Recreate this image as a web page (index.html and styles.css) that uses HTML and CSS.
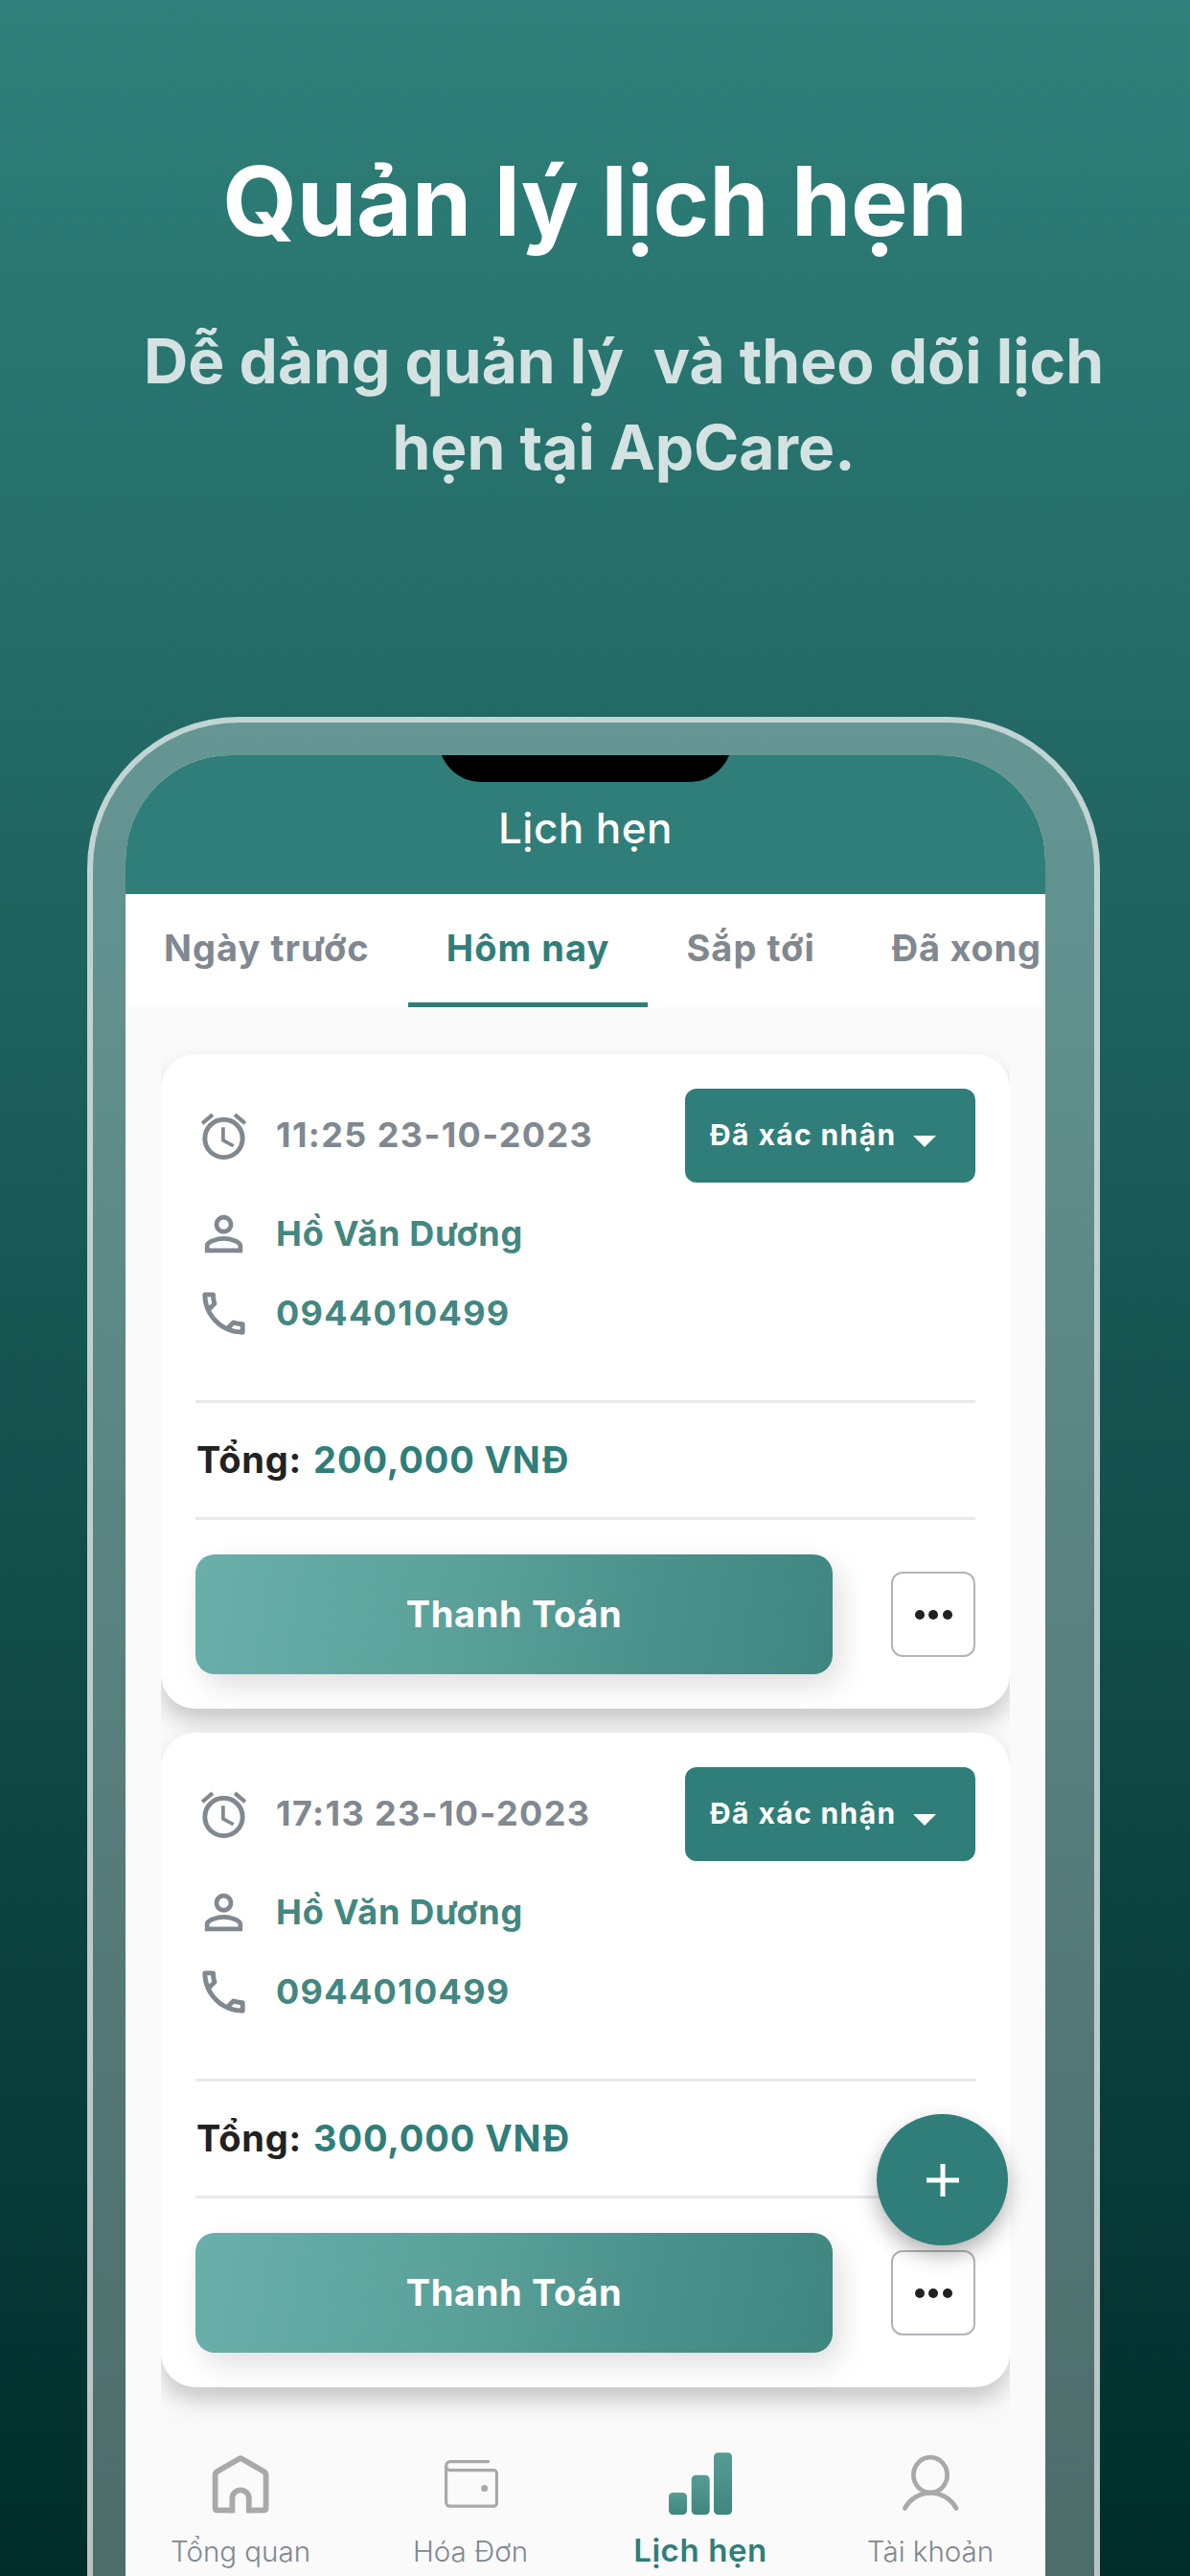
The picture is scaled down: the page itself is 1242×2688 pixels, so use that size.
FILE: index.html
```
<!DOCTYPE html>
<html lang="vi">
<head>
<meta charset="utf-8">
<title>Quản lý lịch hẹn</title>
<link rel="stylesheet" href="styles.css">
</head>
<body>
<svg class="defs" width="0" height="0" aria-hidden="true">
  <defs>
    <linearGradient id="bar" x1="0" y1="0" x2="0" y2="1">
      <stop offset="0" stop-color="#579b95"/>
      <stop offset="1" stop-color="#3f867f"/>
    </linearGradient>
    <symbol id="alarm" viewBox="0 0 24 24">
      <circle cx="12" cy="13" r="8" fill="none" stroke="currentColor" stroke-width="2"/>
      <path d="M2.9 6.6 7.3 2.9M21.1 6.6 16.7 2.9" fill="none" stroke="currentColor" stroke-width="1.7"/>
      <path fill="currentColor" d="M12.5 8.2H11v6l4.75 2.55.75-1.23-4-2.17z"/>
    </symbol>
    <symbol id="person" viewBox="0 0 24 24">
      <path fill="currentColor" d="M12 5.9a2.1 2.1 0 1 1 0 4.2 2.1 2.1 0 0 1 0-4.2m0 9c2.97 0 6.1 1.46 6.1 2.1v1.1H5.9V17c0-.64 3.13-2.1 6.1-2.1M12 4C9.79 4 8 5.79 8 8s1.790 4 4 4 4-1.790 4-4-1.790-4-4-4m0 9c-2.670 0-8 1.340-8 4v3h16v-3c0-2.660-5.330-4-8-4"/>
    </symbol>
    <symbol id="call" viewBox="0 0 24 24">
      <path fill="currentColor" d="M6.540 5c.06.890.21 1.760.45 2.590l-1.200 1.200c-.41-1.200-.67-2.470-.76-3.790h1.510m9.860 12.020c.85.240 1.720.390 2.600.450v1.490c-1.320-.090-2.590-.350-3.800-.750l1.200-1.190M7.500 3H4c-.55 0-1 .450-1 1 0 9.390 7.610 17 17 17 .55 0 1-.450 1-1v-3.490c0-.550-.45-1-1-1-1.240 0-2.450-.200-3.570-.570-.1-.040-.21-.050-.31-.050-.26 0-.51.100-.71.290l-2.200 2.200c-2.830-1.450-5.150-3.760-6.590-6.590l2.200-2.200c.28-.280.36-.670.25-1.020C8.700 6.450 8.500 5.250 8.500 4c0-.550-.45-1-1-1"/>
    </symbol>
  </defs>
</svg>

<div class="page">
  <header class="hero">
    <h1 class="hero-title">Quản lý lịch hẹn</h1>
    <p class="hero-sub">Dễ dàng quản lý&nbsp; và theo dõi lịch<br>hẹn tại ApCare.</p>
  </header>

  <div class="phone">
    <div class="screen">
      <div class="notch"></div>
      <div class="app-bar">Lịch hẹn</div>

      <div class="tabs">
        <div class="tab">Ngày trước</div>
        <div class="tab active">Hôm nay</div>
        <div class="tab">Sắp tới</div>
        <div class="tab last">Đã xong</div>
      </div>

      <main class="list">
        <section class="card">
          <div class="row row-top">
            <svg class="icon"><use href="#alarm"/></svg>
            <span class="time">11:25 23-10-2023</span>
            <button class="status">Đã xác nhận<i class="caret"></i></button>
          </div>
          <div class="row"><svg class="icon"><use href="#person"/></svg><span class="name">Hồ Văn Dương</span></div>
          <div class="row"><svg class="icon"><use href="#call"/></svg><span class="number">0944010499</span></div>
          <div class="total"><span>Tổng:</span><span class="amount">200,000 VNĐ</span></div>
          <div class="actions">
            <button class="pay">Thanh Toán</button>
            <button class="more"><i></i><i></i><i></i></button>
          </div>
        </section>

        <section class="card">
          <div class="row row-top">
            <svg class="icon"><use href="#alarm"/></svg>
            <span class="time">17:13 23-10-2023</span>
            <button class="status">Đã xác nhận<i class="caret"></i></button>
          </div>
          <div class="row"><svg class="icon"><use href="#person"/></svg><span class="name">Hồ Văn Dương</span></div>
          <div class="row"><svg class="icon"><use href="#call"/></svg><span class="number">0944010499</span></div>
          <div class="total"><span>Tổng:</span><span class="amount">300,000 VNĐ</span></div>
          <div class="actions">
            <button class="pay">Thanh Toán</button>
            <button class="more"><i></i><i></i><i></i></button>
          </div>
        </section>
      </main>

      <button class="fab">
        <svg width="36" height="36" viewBox="0 0 36 36"><path d="M18 1v34M1 18h34" stroke="#fff" stroke-width="5" fill="none"/></svg>
      </button>

      <nav class="nav">
        <div class="nav-item">
          <svg class="nav-icon" viewBox="0 0 80 70" fill="none" stroke="#a9a9a9" stroke-width="5.800">
            <path stroke-linejoin="round" d="M31.400 64.300H16q-2.400 0-2.400-2.400V28q0-2.600 2-4L38.600 10.700q1.400-.9 2.800 0L64.400 24q2.200 1.400 2.200 4v33.900q0 2.400-2.400 2.400H48.800"/>
            <path d="M31.400 67.200V52a8.700 8.700 0 0 1 17.400 0v15.200"/>
          </svg>
          <span>Tổng quan</span>
        </div>
        <div class="nav-item">
          <svg class="nav-icon" viewBox="0 0 80 70" fill="none" stroke="#a9a9a9" stroke-width="3.200" stroke-linecap="round">
            <path d="M58.600 13.600H19a4.400 4.400 0 0 0-4.400 4.400v38.200a4 4 0 0 0 4 4h45.800a3 3 0 0 0 3-3V25.700a3 3 0 0 0-3-3H19a4.400 4.400 0 0 1-4.400-4.400"/>
            <circle cx="54.600" cy="41.500" r="3.500" fill="#a9a9a9" stroke="none"/>
          </svg>
          <span>Hóa Đơn</span>
        </div>
        <div class="nav-item current">
          <svg class="nav-icon" viewBox="0 0 80 70" fill="url(#bar)">
            <rect x="7" y="46" width="19" height="23" rx="4.500"/>
            <rect x="30.700" y="27.700" width="19" height="41.300" rx="4.500"/>
            <rect x="54" y="4.300" width="19" height="64.700" rx="4.500"/>
          </svg>
          <span>Lịch hẹn</span>
        </div>
        <div class="nav-item">
          <svg class="nav-icon" viewBox="0 0 80 70" fill="none" stroke="#a9a9a9" stroke-width="4.800" stroke-linecap="round">
            <ellipse cx="40" cy="27.600" rx="17.600" ry="18.400"/>
            <path d="M13.400 62.300a30.500 30.500 0 0 1 53.600 0"/>
          </svg>
          <span>Tài khoản</span>
        </div>
      </nav>
    </div>
  </div>
</div>
</body>
</html>
```

FILE: styles.css
```
* { box-sizing: border-box; }

body {
  margin: 0;
  font-family: Inter, "Noto Sans", sans-serif;
}

.defs { position: absolute; }

.page {
  width: 1242px;
  height: 2688px;
  overflow: hidden;
  background: linear-gradient(180deg, #2f807a 0%, #236a66 27%, #002d2a 100%);
}

/* Headline */
.hero {
  height: 748px;
  padding-top: 150px;
  text-align: center;
}
.hero-title {
  margin: 0;
  font-size: 100px;
  line-height: 120px;
  font-weight: 700;
  color: #fff;
  letter-spacing: -.1px;
}
.hero-sub {
  width: 1042px;
  margin: 62px 0 0 130px;
  font-size: 64px;
  line-height: 90px;
  font-weight: 700;
  color: rgba(255, 255, 255, .8);
}

/* Device */
.phone {
  width: 1057px;
  height: 1940px;
  margin-left: 91px;
  padding: 34px 51px 0 34px;
  border: 6px solid rgba(255, 255, 255, .6);
  border-bottom: 0;
  border-radius: 158px 158px 0 0;
  background: rgba(255, 255, 255, .3);
}
.screen {
  position: relative;
  display: flex;
  flex-direction: column;
  height: 1900px;
  overflow: hidden;
  border-radius: 110px 110px 0 0;
  background: #fafafa;
}
.notch {
  position: absolute;
  top: -32px;
  left: 327px;
  width: 306px;
  height: 60px;
  border-radius: 0 0 44px 44px;
  background: #000;
}
.app-bar {
  height: 145px;
  padding-top: 46px;
  background: #2f7e79;
  color: #fff;
  font-size: 44px;
  line-height: 60px;
  font-weight: 500;
  letter-spacing: .45px;
  text-align: center;
}

.tabs {
  display: flex;
  height: 118px;
  background: #fff;
}
.tab {
  flex: none;
  padding: 0 40px;
  border-bottom: 5px solid transparent;
  color: #808890;
  font-size: 38px;
  line-height: 113px;
  font-weight: 700;
  letter-spacing: 1.05px;
}
.tab.last {
  padding-right: 0;
  letter-spacing: .75px;
}
.tab.active {
  color: #2f7e79;
  border-bottom-color: #2f7e79;
}

/* Appointments */
.list {
  display: flex;
  flex-direction: column;
  gap: 25px;
  height: 1477px;
  margin: 0 37px;
  padding-top: 49px;
  overflow: hidden;
}
.card {
  flex: none;
  height: 683px;
  padding: 36px;
  border-radius: 36px;
  background: #fff;
  box-shadow: 0 14px 24px rgba(0, 0, 0, .2);
}
.row {
  display: flex;
  align-items: center;
  gap: 25px;
  height: 59px;
  margin-top: 24px;
  font-size: 36px;
  line-height: 59px;
  font-weight: 700;
  color: #438781;
}
.row-top {
  height: 98px;
  margin-top: 0;
}
.icon {
  flex: none;
  width: 59px;
  height: 59px;
  color: #808890;
}
.time {
  margin-top: -2px;
  color: #808890;
  letter-spacing: 1.4px;
}
.name { letter-spacing: .75px; }
.number { letter-spacing: 1.3px; }

button {
  border: 0;
  padding: 0;
  font-family: inherit;
  color: #fff;
}
.status {
  display: flex;
  align-items: center;
  width: 303px;
  height: 98px;
  margin-left: auto;
  padding: 0 0 2px 26px;
  border-radius: 12px;
  background: #2f7e79;
  font-size: 30px;
  font-weight: 700;
  letter-spacing: 1.4px;
}
.caret {
  margin: 14px 0 0 17px;
  border: 12px solid transparent;
  border-top-color: #fff;
  border-bottom: 0;
}
.total {
  display: flex;
  gap: 12px;
  height: 125px;
  margin-top: 61px;
  padding-left: 1px;
  border-top: 3px solid #e9e9e9;
  border-bottom: 3px solid #e9e9e9;
  color: #222;
  font-size: 38px;
  line-height: 119px;
  font-weight: 700;
  letter-spacing: .8px;
}
.amount {
  color: #2f7e79;
  letter-spacing: .88px;
}
.actions {
  display: flex;
  align-items: center;
  justify-content: space-between;
  margin-top: 36px;
}
.pay {
  width: 665px;
  height: 125px;
  padding-bottom: 1px;
  border-radius: 20px;
  background: linear-gradient(100deg, #6aafaa 0%, #5aa19a 42%, #4a918b 72%, #3f8680 100%);
  box-shadow: 8px 12px 30px rgba(0, 0, 0, .13);
  font-size: 38px;
  font-weight: 700;
  letter-spacing: .65px;
}
.more {
  display: flex;
  align-items: center;
  justify-content: center;
  gap: 4.500px;
  width: 88px;
  height: 89px;
  border: 2.500px solid #b0b4b9;
  border-radius: 12px;
  background: transparent;
}
.more i {
  width: 10px;
  height: 10px;
  border-radius: 50%;
  background: #222;
}

.fab {
  position: absolute;
  left: 784px;
  top: 1418px;
  display: grid;
  place-items: center;
  width: 137px;
  height: 137px;
  border-radius: 50%;
  background: #2f7e79;
  box-shadow: 0 10px 22px rgba(0, 0, 0, .3);
}

/* Bottom navigation */
.nav {
  display: flex;
  height: 160px;
  background: #fafafa;
  box-shadow: 0 0 12px rgba(0, 0, 0, .025);
}
.nav-item {
  flex: 1;
  display: flex;
  flex-direction: column;
  align-items: center;
  gap: 17px;
  padding-top: 27px;
  color: #808890;
  font-size: 29.500px;
  line-height: 40px;
  font-weight: 300;
}
.nav-icon {
  flex: none;
  width: 80px;
  height: 70px;
}
.nav-item.current {
  gap: 15.500px;
  color: #2f7e79;
  font-size: 33px;
  font-weight: 600;
  letter-spacing: .6px;
}
```
